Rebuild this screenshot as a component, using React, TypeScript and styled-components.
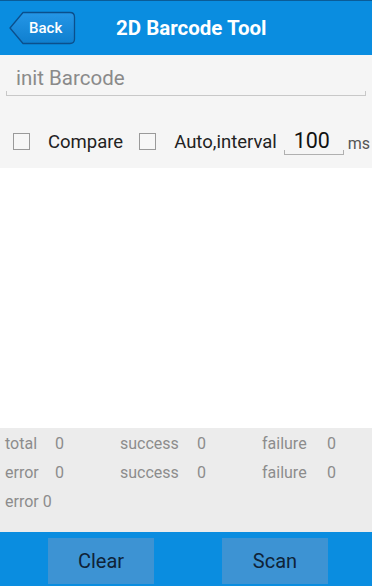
import React from 'react';
import styled, { createGlobalStyle } from 'styled-components';

const GlobalStyle = createGlobalStyle`
    html, body {
        margin: 0;
        padding: 0;
        background: #fff;
        font-family: Roboto, "Liberation Sans", sans-serif;
    }
    #root {
        height: 586px;
    }
`;

const Screen = styled.div`
    display: flex;
    flex-direction: column;
    width: 372px;
    height: 586px;
    overflow: hidden;
    background: #fff;
`;

const TitleBar = styled.header`
    display: flex;
    align-items: center;
    height: 55px;
    flex-shrink: 0;
    box-sizing: border-box;
    padding: 0 0 0 9px;
    background: #0a8de0;
    border-top: 1px solid #0a5c98;
`;

const BackButton = styled.button`
    position: relative;
    width: 67px;
    height: 34px;
    padding: 0 0 0 14px;
    border: 0;
    background: transparent;
    color: #fff;
    font: 500 15px Roboto, "Liberation Sans", sans-serif;
    text-align: left;

    svg {
        position: absolute;
        left: 0;
        top: 0;
    }

    span {
        position: relative;
        left: 6px;
    }
`;

const Title = styled.h1`
    margin: 0 0 0 40px;
    color: #fff;
    font: bold 20.5px Roboto, "Liberation Sans", sans-serif;
`;

const InputArea = styled.div`
    background: #f5f5f5;
    padding: 8px 6px 5px;
`;

const BarcodeInput = styled.div`
    position: relative;
    height: 32px;
    padding-left: 10px;
    color: #8a8a8a;
    font-size: 20.5px;
    line-height: 30px;
    border-bottom: 1px solid #c8c8c8;

    &::before, &::after {
        content: '';
        position: absolute;
        bottom: 0;
        width: 1px;
        height: 4px;
        background: #c8c8c8;
    }
    &::before { left: 0; }
    &::after { right: 0; }
`;

const OptionRow = styled.div`
    display: flex;
    align-items: center;
    height: 53px;
    flex-shrink: 0;
    padding: 14px 0 0 13px;
    background: #f5f5f5;
    white-space: nowrap;
`;

const Check = styled.span`
    flex-shrink: 0;
    width: 17px;
    height: 17px;
    box-sizing: border-box;
    border: 1px solid #9a9a9a;
    background: #f7f7f7;
    margin-right: 18px;
`;

const OptionLabel = styled.span<{ $right: number }>`
    color: #222;
    font-size: 18.5px;
    margin-right: ${p => p.$right}px;
`;

const IntervalField = styled.span`
    position: relative;
    flex-shrink: 0;
    width: 60px;
    padding-right: 4px;
    box-sizing: border-box;
    text-align: center;
    color: #111;
    font-size: 21.5px;
    line-height: 26px;
    border-bottom: 1px solid #b0b0b0;
    margin-right: 4px;

    &::before, &::after {
        content: '';
        position: absolute;
        bottom: 0;
        width: 1px;
        height: 4px;
        background: #b0b0b0;
    }
    &::before { left: 0; }
    &::after { right: 0; }
`;

const Unit = styled.span`
    color: #555;
    font-size: 16px;
    margin-top: 4px;
`;

const ImageArea = styled.div`
    flex: 1;
    background: #fff;
`;

const Stats = styled.div`
    display: grid;
    grid-template-columns: 50px 65px 77px 65px 65px 1fr;
    grid-auto-rows: 29px;
    align-items: center;
    height: 104px;
    flex-shrink: 0;
    box-sizing: border-box;
    padding: 1px 0 0 5px;
    background: #ececec;
    color: #8c8c8c;
    font-size: 16px;
`;

const LastRow = styled.div`
    grid-column: 1 / -1;
`;

const BottomBar = styled.footer`
    display: flex;
    justify-content: space-between;
    align-items: flex-end;
    height: 54px;
    flex-shrink: 0;
    box-sizing: border-box;
    padding: 6px 44px 2px 48px;
    background: #0a8de0;
`;

const ActionButton = styled.button`
    width: 106px;
    height: 46px;
    border: 0;
    background: #3d93d3;
    color: #0f2338;
    font: 20px Roboto, "Liberation Sans", sans-serif;
`;

const BackShape = () => (
    <svg width="67" height="34" viewBox="0 0 67 34">
        <defs>
            <linearGradient id="bk" x1="0" y1="0" x2="0" y2="1">
                <stop offset="0" stopColor="#2596e6" />
                <stop offset="1" stopColor="#0f7fcf" />
            </linearGradient>
        </defs>
        <path
            d="M1 17 L14 1.5 H61 Q65.5 1.5 65.5 6 V28 Q65.5 32.5 61 32.5 H14 Z"
            fill="url(#bk)"
            stroke="#0b4f8c"
            strokeWidth="1.3"
            strokeLinejoin="round"
        />
    </svg>
);

const stats = [
    ['total', 'success', 'failure'],
    ['error', 'success', 'failure'],
];

export default function App() {
    return <>
        <GlobalStyle />
        <Screen>
            <TitleBar>
                <BackButton>
                    <BackShape />
                    <span>Back</span>
                </BackButton>
                <Title>2D Barcode Tool</Title>
            </TitleBar>
            <InputArea>
                <BarcodeInput>init Barcode</BarcodeInput>
            </InputArea>
            <OptionRow>
                <Check />
                <OptionLabel $right={16}>Compare</OptionLabel>
                <Check />
                <OptionLabel $right={7}>Auto,interval</OptionLabel>
                <IntervalField>100</IntervalField>
                <Unit>ms</Unit>
            </OptionRow>
            <ImageArea />
            <Stats>
                {stats.map((row, r) => row.map(label => (
                    <React.Fragment key={label + r}>
                        <span>{label}</span>
                        <span>0</span>
                    </React.Fragment>
                )))}
                <LastRow>error 0</LastRow>
            </Stats>
            <BottomBar>
                <ActionButton>Clear</ActionButton>
                <ActionButton>Scan</ActionButton>
            </BottomBar>
        </Screen>
    </>;
}
